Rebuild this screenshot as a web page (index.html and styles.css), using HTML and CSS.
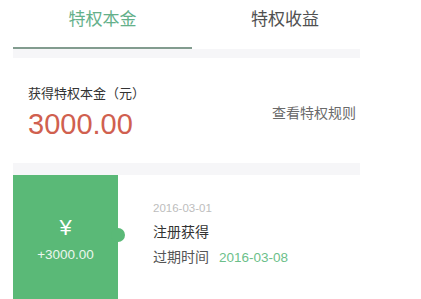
FILE: index.html
```html
<!DOCTYPE html>
<html lang="zh">
<head>
<meta charset="utf-8">
<link rel="stylesheet" href="styles.css">
</head>
<body>
<div class="page">
  <div class="tabs">
    <div class="tab active">特权本金</div>
    <div class="tab">特权收益</div>
  </div>
  <div class="gap gap-top"></div>
  <div class="summary">
    <div class="summary-main">
      <div class="summary-label">获得特权本金（元）</div>
      <div class="summary-amount">3000.00</div>
    </div>
    <div class="summary-link">查看特权规则</div>
  </div>
  <div class="gap gap-mid"></div>
  <div class="record">
    <div class="record-badge">
      <div class="badge-yen">¥</div>
      <div class="badge-amount">+3000.00</div>
    </div>
    <div class="record-info">
      <div class="record-date">2016-03-01</div>
      <div class="record-title">注册获得</div>
      <div class="record-expire">过期时间<span class="expire-date">2016-03-08</span></div>
    </div>
  </div>
</div>
</body>
</html>
```
FILE: styles.css
```css
html, body {
  margin: 0;
  padding: 0;
  background: #ffffff;
}
body {
  font-family: "Liberation Sans", "Noto Sans CJK SC", sans-serif;
  overflow: hidden;
}
.page {
  margin-left: 13px;
  width: 347px;
}
.tabs {
  display: flex;
  height: 49px;
}
.tab {
  box-sizing: border-box;
  height: 49px;
  padding-top: 10px;
  font-size: 17px;
  line-height: 20px;
  text-align: center;
  color: #505050;
}
.tab.active {
  width: 179px;
  color: #64b08a;
  border-bottom: 2px solid #829c8f;
}
.tab:not(.active) {
  flex: 1;
  padding-left: 18px;
}
.gap {
  background: #f6f6f8;
}
.gap-top {
  height: 9px;
}
.gap-mid {
  height: 12px;
}
.summary {
  display: flex;
  justify-content: space-between;
  height: 105px;
  background: #ffffff;
}
.summary-main {
  padding-top: 28px;
  padding-left: 15px;
}
.summary-label {
  font-size: 13px;
  line-height: 15px;
  color: #333333;
}
.summary-amount {
  margin-top: 6px;
  font-size: 29px;
  line-height: 34px;
  color: #d0604f;
}
.summary-link {
  padding-top: 47px;
  padding-right: 4px;
  font-size: 14px;
  line-height: 16px;
  color: #6a6a6a;
}
.record {
  display: flex;
  height: 124px;
}
.record-badge {
  position: relative;
  width: 105px;
  background: #5ab977;
  color: #ffffff;
  text-align: center;
  padding-top: 41px;
  box-sizing: border-box;
}
.record-badge::after {
  content: "";
  position: absolute;
  right: -7px;
  top: 53px;
  width: 14px;
  height: 14px;
  border-radius: 50%;
  background: #5ab977;
}
.badge-yen {
  font-size: 22px;
  line-height: 24px;
}
.badge-amount {
  margin-top: 7px;
  font-size: 13.5px;
  line-height: 16px;
  color: #eaf6ee;
}
.record-info {
  padding-left: 35px;
  padding-top: 26px;
}
.record-date {
  font-size: 11.5px;
  line-height: 14px;
  color: #bdbdbd;
}
.record-title {
  margin-top: 8px;
  font-size: 14px;
  line-height: 18px;
  color: #333333;
}
.record-expire {
  margin-top: 7px;
  font-size: 14px;
  line-height: 18px;
  color: #555555;
}
.expire-date {
  margin-left: 10px;
  font-size: 13.5px;
  color: #6cbf8a;
}
```
